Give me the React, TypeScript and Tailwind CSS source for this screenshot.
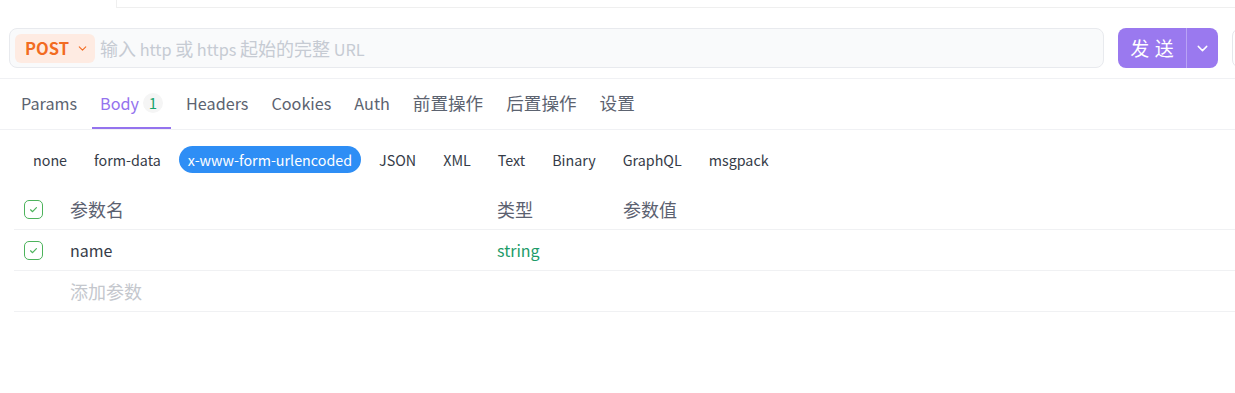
import { ChevronDown } from "lucide-react";

const tabs = ["Params", "Body", "Headers", "Cookies", "Auth", "前置操作", "后置操作", "设置"];
const bodyTypes = ["none", "form-data", "x-www-form-urlencoded", "JSON", "XML", "Text", "Binary", "GraphQL", "msgpack"];

function Check() {
  return (
    <span className="w-[19px] h-[19px] rounded-[5px] border border-[#4cb35b] flex items-center justify-center">
      <svg viewBox="0 0 12 12" className="w-[11px] h-[11px]" fill="none" stroke="#4cb35b" strokeWidth={1.3} strokeLinecap="round" strokeLinejoin="round">
        <path d="M2.8 6.3l2.2 2.1 4.2-4.4" />
      </svg>
    </span>
  );
}

export default function App() {
  return (
    <div
      className="w-[1235px] h-[393px] overflow-hidden bg-white"
      style={{ fontFamily: '"Noto Sans CJK SC", "Noto Sans", sans-serif' }}
    >
      {/* top strip */}
      <div className="h-2 flex">
        <div className="ml-[116px] flex-1 border-l border-b border-[#efefef]" />
      </div>

      {/* URL row */}
      <div className="mt-5 h-10 flex items-center pl-[9px] gap-[14px]">
        <div className="w-[1095px] shrink-0 h-10 rounded-lg border border-[#e8eaee] bg-[#f9fafb] flex items-center pl-[5px] gap-[5px]">
          <div className="h-[29px] w-20 rounded-md bg-[#feebe2] flex items-center pl-[10px] gap-[7px]">
            <span className="text-[16.5px] font-bold text-[#f26b21] leading-none">POST</span>
            <ChevronDown size={13} strokeWidth={2} className="text-[#f26b21]" />
          </div>
          <span className="text-[18px] text-[#c6cbd3]">
            输入<span className="text-[16.3px]"> http </span>或<span className="text-[16.3px]"> https </span>起始的完整
            <span className="text-[16.3px]"> URL</span>
          </span>
        </div>
        <div className="w-[100px] shrink-0 h-10 rounded-lg bg-[#9a79ef] flex">
          <div className="w-[69px] flex items-center justify-center border-r border-[#b9a3f5]">
            <span className="text-[19px] text-white tracking-[0.3em] pl-[0.3em]">发送</span>
          </div>
          <div className="flex-1 flex items-center justify-center">
            <ChevronDown size={17} strokeWidth={2} className="text-white" />
          </div>
        </div>
        <div className="w-10 shrink-0 h-10 rounded-lg border border-[#e5e7eb] bg-white" />
      </div>

      {/* tabs */}
      <div className="mt-[10px] h-[52px] border-t border-b border-[#f0f1f4] flex pl-[13px] gap-[7px]">
        {tabs.map((t) => {
          const active = t === "Body";
          const cjk = /[^\x00-\x7f]/.test(t);
          return (
            <div
              key={t}
              className={`h-full flex items-center px-2 border-b-2 ${active ? "border-[#9473ee]" : "border-transparent"}`}
            >
              <span
                className={`${cjk ? "text-[17.6px]" : "text-[16.2px]"} ${active ? "text-[#9473ee]" : "text-[#5c6370]"}`}
              >
                {t}
              </span>
              {active && (
                <span className="ml-1 w-5 h-5 rounded-full bg-[#f5f5f5] text-[#17a46e] text-[15px] flex items-center justify-center">
                  1
                </span>
              )}
            </div>
          );
        })}
      </div>

      {/* body types */}
      <div className="pt-4 pl-6 flex gap-[9px]">
        {bodyTypes.map((b) => {
          const active = b === "x-www-form-urlencoded";
          return (
            <span
              key={b}
              className={`h-[27px] px-[9px] rounded-full flex items-center text-[14.3px] ${active ? "bg-[#2e8ef5] text-white" : "text-[#353b47]"}`}
            >
              {b}
            </span>
          );
        })}
      </div>

      {/* table */}
      <div className="mt-4 ml-[14px] text-[18px]">
        <div className="h-[41px] border-b border-[#f0f1f3] flex items-center">
          <div className="w-14 pl-[10px] flex"><Check /></div>
          <div className="w-[427px] text-[#5b6170]">参数名</div>
          <div className="w-[126px] text-[#5b6170]">类型</div>
          <div className="text-[#5b6170]">参数值</div>
        </div>
        <div className="h-[41px] border-b border-[#f0f1f3] flex items-center">
          <div className="w-14 pl-[10px] flex"><Check /></div>
          <div className="w-[427px] text-[16px] text-[#363c48]">name</div>
          <div className="w-[126px] text-[16px] text-[#1d9b68]">string</div>
          <div />
        </div>
        <div className="h-[41px] border-b border-[#f0f1f3] flex items-center">
          <div className="w-14" />
          <div className="text-[#c4c7cd]">添加参数</div>
        </div>
      </div>
    </div>
  );
}
